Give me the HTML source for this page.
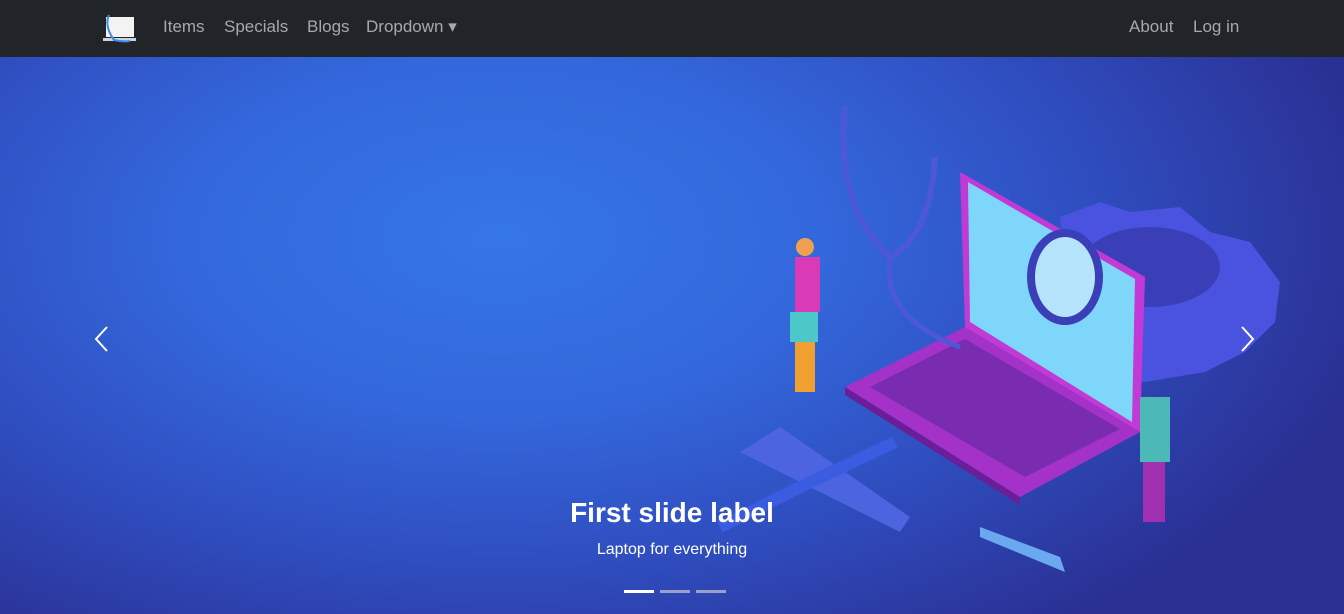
<!DOCTYPE html>
<html><head><style>
body{margin:0;width:1344px;height:614px;overflow:hidden;font-family:"Liberation Sans",sans-serif;}
nav{height:57px;background:#212529;position:relative;}
nav a{position:absolute;top:17px;color:#a6a8aa;font-size:17px;text-decoration:none}
.hero{position:absolute;top:57px;left:0;width:1344px;height:557px;
background:radial-gradient(ellipse 900px 500px at 500px 180px,#3576e6 0%,#3368dc 35%,#2f4ec0 65%,#2a2f92 100%);overflow:hidden}
.cap{position:absolute;width:1344px;text-align:center;color:#fff}
</style></head><body>
<nav>
<svg style="position:absolute;left:102px;top:14px" width="36" height="30" viewBox="0 0 36 30"><rect x="4" y="3" width="28" height="20" fill="#f3f3f3"/><rect x="1" y="24" width="33" height="3" fill="#cfd3d8"/><path d="M7 1 Q2 12 12 26 Q20 28 28 27" stroke="#3c8ce8" stroke-width="2" fill="none"/></svg>
<a style="left:163px">Items</a><a style="left:224px">Specials</a><a style="left:307px">Blogs</a><a style="left:366px">Dropdown ▾</a>
<a style="left:1129px">About</a><a style="left:1193px">Log in</a>
</nav>
<div class="hero">
<svg width="1344" height="557" style="position:absolute;left:0;top:0">
<path d="M1060 160 l40 -15 l30 10 l50 -5 l30 25 l40 10 l30 40 l-5 40 l-30 30 l-40 20 l-60 10 l-70 -10 z" fill="#4a52e0"/>
<ellipse cx="1150" cy="210" rx="70" ry="40" fill="#3a3fb8"/>
<path d="M960 115 L1145 220 L1140 375 L965 270 Z" fill="#c23ad6"/>
<path d="M968 125 L1135 222 L1132 365 L970 265 Z" fill="#7fd6fb"/>
<path d="M845 330 L965 270 L1140 375 L1020 440 Z" fill="#a532c8"/>
<path d="M870 330 L965 282 L1120 372 L1025 420 Z" fill="#7a2cb0"/>
<path d="M845 330 L1020 440 L1020 448 L845 338 Z" fill="#6a1f98"/>
<ellipse cx="1065" cy="220" rx="38" ry="48" fill="#3a3fb8"/>
<ellipse cx="1065" cy="220" rx="30" ry="40" fill="#b5e3fb"/>
<path d="M845 50 Q835 150 890 200 Q930 180 935 100" stroke="#4c58d8" stroke-width="6" fill="none"/>
<path d="M890 200 Q880 260 960 290" stroke="#4c58d8" stroke-width="5" fill="none"/>
<rect x="795" y="200" width="25" height="55" fill="#d83ab8"/>
<rect x="790" y="255" width="28" height="30" fill="#4cc8c8"/>
<rect x="795" y="285" width="20" height="50" fill="#f0a030"/>
<circle cx="805" cy="190" r="9" fill="#f0a050"/>
<rect x="1140" y="340" width="30" height="65" fill="#4cb8b8"/>
<rect x="1143" y="405" width="22" height="60" fill="#a030b0"/>
<path d="M740 395 L780 370 L910 460 L900 475 Z" fill="#4c64e0"/>
<path d="M720 470 L800 430 L895 385" stroke="#3a5ce0" stroke-width="12" fill="none"/>
<path d="M980 470 L1060 500 L1065 515 L980 480 Z" fill="#6aa8f0"/>
</svg>
<div class="cap" style="top:440px;font-size:28px;font-weight:bold">First slide label</div>
<div class="cap" style="top:484px;font-size:16px">Laptop for everything</div>
<div style="position:absolute;left:624px;top:533px;width:30px;height:3px;background:#fff"></div>
<div style="position:absolute;left:660px;top:533px;width:30px;height:3px;background:#9aa0c8"></div>
<div style="position:absolute;left:696px;top:533px;width:30px;height:3px;background:#9aa0c8"></div>
<svg style="position:absolute;left:92px;top:268px" width="20" height="28"><path d="M15 2 L4 14 L15 26" stroke="#fff" stroke-width="2" fill="none"/></svg>
<svg style="position:absolute;left:1238px;top:268px" width="20" height="28"><path d="M4 2 L15 14 L4 26" stroke="#fff" stroke-width="2" fill="none"/></svg>
</div>
</body></html>
